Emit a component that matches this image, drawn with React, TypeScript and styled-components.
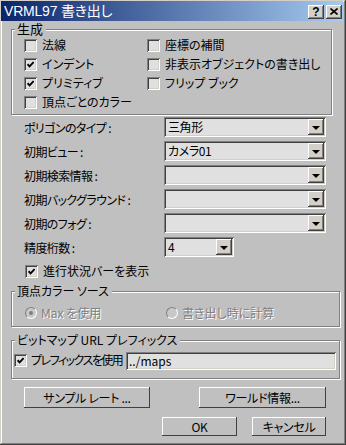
import styled, { createGlobalStyle } from "styled-components";

const GlobalStyle = createGlobalStyle`
  html, body {
    margin: 0;
    padding: 0;
    background: #c0c0c0;
  }
  * {
    box-sizing: border-box;
  }
`;

const FONT = `"Noto Sans CJK JP", "Liberation Sans", sans-serif`;

const sunken = `
  box-shadow: inset 1px 1px #808080, inset -1px -1px #ffffff,
    inset 2px 2px #404040, inset -2px -2px #d4d0c8;
`;

const raised = `
  box-shadow: inset -1px -1px #404040, inset 1px 1px #ffffff,
    inset -2px -2px #808080, inset 2px 2px #d4d0c8;
`;

function App() {
  return (
    <>
      <GlobalStyle />
      <Window>
        <TitleBar>
          <Title>VRML97 書き出し</Title>
          <TitleButtons>
            <TitleButton>?</TitleButton>
            <TitleButton>
              <svg width="8" height="7" viewBox="0 0 8 7">
                <path d="M0.5 0.5 L7.5 6.5 M7.5 0.5 L0.5 6.5" stroke="#000" strokeWidth="1.6" />
              </svg>
            </TitleButton>
          </TitleButtons>
        </TitleBar>

        <Body>
          <Group $width={321} $top={8} $left={10}>
            <Legend $size={13}>生成</Legend>
            <CheckGrid>
              <Check label="法線" />
              <Check label="座標の補間" />
              <Check label="インデント" checked />
              <Check label="非表示オブジェクトの書き出し" />
              <Check label="プリミティブ" checked />
              <Check label="フリップ ブック" />
              <Check label="頂点ごとのカラー" />
            </CheckGrid>
          </Group>

          <Form>
            <Field label="ポリゴンのタイプ :" value="三角形" />
            <Field label="初期ビュー :" value="カメラ01" />
            <Field label="初期検索情報 :" />
            <Field label="初期バックグラウンド :" />
            <Field label="初期のフォグ :" />
            <Field label="精度桁数 :" value="4" width={70} />
          </Form>

          <ProgressRow>
            <Check label="進行状況バーを表示" checked />
          </ProgressRow>

          <Group $width={329} $top={10} $left={10}>
            <Legend $size={12}>頂点カラー ソース</Legend>
            <RadioRow>
              <Radio label="Max を使用" checked />
              <Radio label="書き出し時に計算" />
            </RadioRow>
          </Group>

          <Group $width={329} $top={13} $left={10}>
            <Legend $size={12}>ビットマップ URL プレフィックス</Legend>
            <PrefixRow>
              <Check label="プレフィックスを使用" checked compact />
              <TextInput>../maps</TextInput>
            </PrefixRow>
          </Group>

          <ButtonRow>
            <Button $width={126} $height={21}>サンプル レート ...</Button>
            <Button $width={127} $height={21}>ワールド情報...</Button>
          </ButtonRow>
          <ActionRow>
            <Button $width={75} $height={19}>OK</Button>
            <Button $width={74} $height={19}>キャンセル</Button>
          </ActionRow>
        </Body>
      </Window>
    </>
  );
}

function Check({ label, checked, compact }: { label: string; checked?: boolean; compact?: boolean }) {
  return (
    <CheckItem $compact={compact}>
      <CheckBox>
        {checked && (
          <svg width="7" height="7" viewBox="0 0 7 7">
            <path d="M0.6 3.2 L2.6 5.4 L6.6 1" fill="none" stroke="#000" strokeWidth="1.8" />
          </svg>
        )}
      </CheckBox>
      <ItemText $compact={compact}>{label}</ItemText>
    </CheckItem>
  );
}

function Radio({ label, checked }: { label: string; checked?: boolean }) {
  return (
    <RadioItem>
      <RadioCircle>{checked && <RadioDot />}</RadioCircle>
      <DisabledText>{label}</DisabledText>
    </RadioItem>
  );
}

function Field({ label, value, width = 162 }: { label: string; value?: string; width?: number }) {
  return (
    <FieldRow>
      <FieldLabel>{label}</FieldLabel>
      <Combo $width={width}>
        <ComboValue>{value}</ComboValue>
        <ArrowButton>
          <Arrow />
        </ArrowButton>
      </Combo>
    </FieldRow>
  );
}

const Window = styled.div`
  width: 346px;
  height: 445px;
  padding: 1px 3px 3px 1px;
  background: #c0c0c0;
  box-shadow: inset -1px -1px #404040, inset 1px 1px #d4d0c8,
    inset -2px -2px #808080, inset 2px 2px #ffffff;
  display: flex;
  flex-direction: column;
  font-family: ${FONT};
  font-feature-settings: "palt";
  color: #000;
`;

const TitleBar = styled.div`
  height: 20px;
  display: flex;
  align-items: center;
  justify-content: space-between;
  padding: 0 1px 0 3px;
  background: linear-gradient(to right, #0a246a, #a6caf0);
`;

const Title = styled.div`
  color: #fff;
  font-family: "Liberation Sans", "Noto Sans CJK JP", sans-serif;
  font-size: 14px;
  line-height: 16px;
  letter-spacing: -0.2px;
`;

const TitleButtons = styled.div`
  display: flex;
  gap: 2px;
  margin-top: 1px;
`;

const TitleButton = styled.div`
  width: 16px;
  height: 14px;
  background: #d4d0c8;
  ${raised}
  display: flex;
  align-items: center;
  justify-content: center;
  font-family: "Liberation Sans", sans-serif;
  font-weight: bold;
  font-size: 12px;
  line-height: 12px;
`;

const Body = styled.div`
  flex: 1;
  display: flex;
  flex-direction: column;
  align-items: flex-start;
`;

const Group = styled.div<{ $width: number; $top: number; $left: number }>`
  position: relative;
  width: ${(p) => p.$width}px;
  margin: ${(p) => p.$top}px 0 0 ${(p) => p.$left}px;
  border: 1px solid #808080;
  box-shadow: inset 1px 1px #ffffff, 1px 1px #ffffff;
`;

const Legend = styled.div<{ $size: number }>`
  position: absolute;
  top: -8px;
  left: 3px;
  padding: 0 3px 0 2px;
  background: #c0c0c0;
  font-size: ${(p) => p.$size}px;
  line-height: 14px;
`;

const CheckGrid = styled.div`
  display: grid;
  grid-template-columns: 123px 1fr;
  grid-auto-rows: 19px;
  padding: 6px 0 2px 12px;
`;

const CheckItem = styled.div<{ $compact?: boolean }>`
  display: flex;
  align-items: center;
  gap: ${(p) => (p.$compact ? 4 : 5)}px;
  height: 19px;
  flex: none;
  width: ${(p) => (p.$compact ? "112px" : "auto")};
`;

const CheckBox = styled.span`
  width: 13px;
  height: 13px;
  flex: none;
  background: #e0e0e0;
  ${sunken}
  display: flex;
  align-items: center;
  justify-content: center;
`;

const ItemText = styled.span<{ $compact?: boolean }>`
  font-size: 12px;
  line-height: 14px;
  white-space: nowrap;
  margin-top: -2px;
  letter-spacing: ${(p) => (p.$compact ? "-1.5px" : "0")};
`;

const Form = styled.div`
  display: flex;
  flex-direction: column;
  gap: 4px;
  margin: 2px 0 0 23px;
`;

const FieldRow = styled.div`
  display: flex;
  align-items: center;
  height: 20px;
`;

const FieldLabel = styled.div`
  width: 140px;
  font-size: 12px;
  letter-spacing: -0.6px;
  white-space: pre;
`;

const Combo = styled.div<{ $width: number }>`
  width: ${(p) => p.$width}px;
  height: 20px;
  padding: 2px;
  background: #e0e0e0;
  ${sunken}
  display: flex;
  align-items: center;
`;

const ComboValue = styled.div`
  flex: 1;
  padding-left: 2px;
  font-size: 12px;
  line-height: 16px;
  letter-spacing: -0.4px;
`;

const ArrowButton = styled.div`
  width: 16px;
  height: 16px;
  background: #d4d0c8;
  ${raised}
  display: flex;
  align-items: center;
  justify-content: center;
`;

const Arrow = styled.span`
  width: 0;
  height: 0;
  border-left: 4px solid transparent;
  border-right: 4px solid transparent;
  border-top: 4px solid #000;
  margin-top: 1px;
`;

const ProgressRow = styled.div`
  margin: 5px 0 0 24px;
`;

const RadioRow = styled.div`
  display: grid;
  grid-template-columns: 141px 1fr;
  height: 14px;
  margin: 12px 0 8px 13px;
`;

const RadioItem = styled.div`
  display: flex;
  align-items: center;
  gap: 4px;
`;

const RadioCircle = styled.span`
  width: 12px;
  height: 12px;
  border-radius: 50%;
  flex: none;
  background: #c8c8c8;
  border: 1px solid;
  border-color: #808080 #ffffff #ffffff #808080;
  display: flex;
  align-items: center;
  justify-content: center;
`;

const RadioDot = styled.span`
  width: 4px;
  height: 4px;
  border-radius: 50%;
  background: #808080;
`;

const DisabledText = styled.span`
  font-size: 12px;
  color: #808080;
  text-shadow: 1px 1px #ffffff;
  white-space: nowrap;
`;

const PrefixRow = styled.div`
  display: flex;
  align-items: center;
  margin: 10px 3px 8px 2px;
`;

const TextInput = styled.div`
  flex: 1;
  height: 18px;
  padding: 2px 3px;
  background: #e0e0e0;
  ${sunken}
  font-size: 12px;
  line-height: 14px;
`;

const ButtonRow = styled.div`
  display: flex;
  gap: 49px;
  margin: 8px 0 0 23px;
`;

const ActionRow = styled.div`
  display: flex;
  gap: 15px;
  margin: 9px 0 0 161px;
`;

const Button = styled.div<{ $width: number; $height: number }>`
  width: ${(p) => p.$width}px;
  height: ${(p) => p.$height}px;
  background: #c0c0c0;
  box-shadow: inset -1px -1px #404040, inset 1px 1px #ffffff;
  display: flex;
  align-items: center;
  justify-content: center;
  font-size: 12px;
  letter-spacing: -0.3px;
  white-space: nowrap;
`;

export default App;
